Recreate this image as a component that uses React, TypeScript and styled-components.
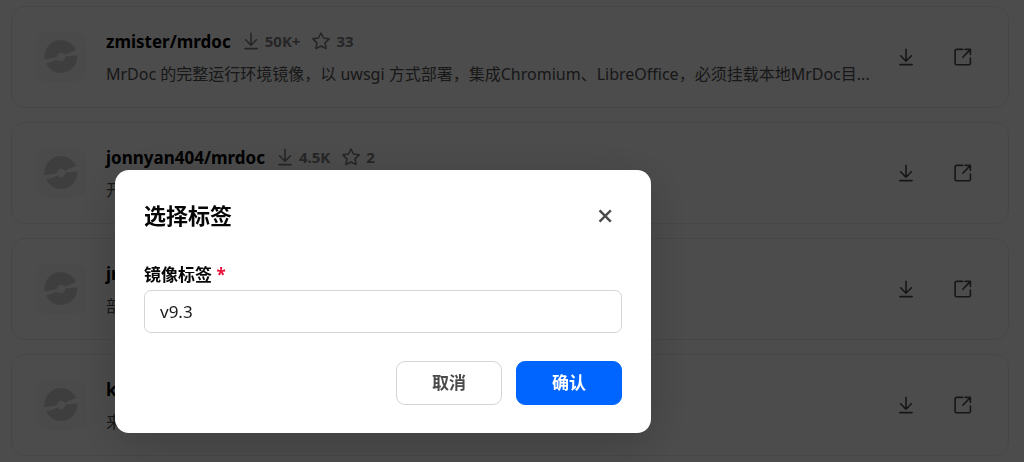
import React from "react";
import styled, { createGlobalStyle } from "styled-components";

const GlobalStyle = createGlobalStyle`
  * { box-sizing: border-box; }
  body {
    margin: 0;
    background: #fff;
    color: #060607;
    font-family: "Noto Sans", "Noto Sans CJK SC", sans-serif;
    overflow: hidden;
  }
  button, input { font-family: inherit; }
`;

const List = styled.ul`
  display: flex;
  flex-direction: column;
  gap: 14px;
  margin: 0;
  padding: 6px 15px 6px 11px;
  list-style: none;
`;

const Card = styled.li`
  display: flex;
  align-items: center;
  gap: 20px;
  padding: 20px 24px;
  border: 1px solid #ebebeb;
  border-radius: 14px;
`;

const Thumb = styled.div`
  display: flex;
  align-items: center;
  justify-content: center;
  flex: none;
  width: 50px;
  height: 50px;
  border-radius: 10px;
  background: #f7f7f7;
`;

const Info = styled.div`
  flex: 1;
  min-width: 0;
`;

const Heading = styled.div`
  display: flex;
  align-items: flex-start;
  gap: 11px;
  height: 30px;
`;

const Name = styled.h3`
  margin: 0;
  font-size: 17px;
  line-height: 30px;
  font-weight: 700;
  color: #000;
`;

const Stat = styled.span`
  display: flex;
  align-items: center;
  gap: 5px;
  font-size: 15px;
  line-height: 28px;
  font-weight: 700;
  color: #7d7d80;
`;

const Description = styled.p`
  margin: 0;
  padding-top: 4px;
  font-size: 16px;
  line-height: 26px;
  color: #505053;
  white-space: nowrap;
  font-variant-ligatures: none;
`;

const Actions = styled.div`
  display: flex;
  gap: 14px;
`;

const IconButton = styled.button<{ $size: number }>`
  display: flex;
  align-items: center;
  justify-content: center;
  width: ${(p) => p.$size}px;
  height: ${(p) => p.$size}px;
  padding: 0;
  border: 0;
  border-radius: 8px;
  background: transparent;
  color: #4b4b4c;
  cursor: pointer;
`;

const Overlay = styled.div`
  position: fixed;
  inset: 0;
  display: flex;
  align-items: flex-start;
  padding: 170px 20px 0 115px;
  background: rgba(0, 0, 0, 0.7);
`;

const Dialog = styled.form`
  width: 100%;
  max-width: 536px;
  padding: 28px 29px;
  border-radius: 14px;
  background: #fff;
  box-shadow: 0 10px 50px rgba(0, 0, 0, 0.2);
`;

const DialogHeader = styled.header`
  display: flex;
  align-items: center;
  justify-content: space-between;
  height: 36px;
`;

const Title = styled.h2`
  margin: 0;
  padding-bottom: 2px;
  font-size: 22px;
  line-height: 34px;
  font-weight: 700;
`;

const Label = styled.label`
  display: block;
  padding: 27px 0 1px;
  font-size: 17px;
  line-height: 28px;
  font-weight: 700;
`;

const Required = styled.span`
  color: #e9143d;
`;

const TextInput = styled.input`
  display: block;
  width: 100%;
  height: 43px;
  padding: 0 15px;
  border: 1px solid #d5d5d6;
  border-radius: 7px;
  background: #fff;
  color: #1c1c1e;
  font-size: 17px;
  outline: none;
`;

const Footer = styled.footer`
  display: flex;
  justify-content: flex-end;
  gap: 14px;
  padding-top: 28px;
`;

const Button = styled.button<{ $primary?: boolean }>`
  width: 106px;
  height: 44px;
  padding: 0 0 4px;
  border: 1px solid ${(p) => (p.$primary ? "#0064ff" : "#d5d5d6")};
  border-radius: 9px;
  background: ${(p) => (p.$primary ? "#0064ff" : "#fff")};
  color: ${(p) => (p.$primary ? "#fff" : "#4b4b4c")};
  font-size: 17px;
  font-weight: 700;
  cursor: pointer;
`;

const DownloadIcon = () => (
  <svg width="18" height="18" viewBox="0 0 18 18" fill="none" stroke="currentColor" strokeWidth="1.6" strokeLinecap="round" strokeLinejoin="round" aria-hidden="true">
    <path d="M9 1.2v11.6M3.6 7.8 9 13.2l5.4-5.4M2.9 16.6h12.2" />
  </svg>
);

const StarIcon = () => (
  <svg width="20" height="20" viewBox="0 0 20 20" fill="none" stroke="currentColor" strokeWidth="1.6" strokeLinejoin="round" aria-hidden="true">
    <path d="m10 2 2.5 5 5.6.9-4 4 .9 5.7-5-2.6-5 2.6.9-5.7-4-4 5.6-.9z" />
  </svg>
);

const OpenIcon = () => (
  <svg width="18" height="18" viewBox="0 0 18 18" fill="none" stroke="currentColor" strokeWidth="1.6" strokeLinecap="round" strokeLinejoin="round" aria-hidden="true">
    <path d="M8.7 1.4H2.6A1.5 1.5 0 0 0 1.1 2.9V15.2A1.5 1.5 0 0 0 2.6 16.7H14.900A1.5 1.5 0 0 0 16.400 15.2V10M11.200 1.4H16.400V6.400M16.200 1.600 8.800 9.200" />
  </svg>
);

const CloseIcon = () => (
  <svg width="14" height="14" viewBox="0 0 14 14" fill="none" stroke="currentColor" strokeWidth="2.4" strokeLinecap="square" aria-hidden="true">
    <path d="m2.400 2.200 9.600 9.600M12 2.200 2.400 11.800" />
  </svg>
);

const ImageLogo = () => (
  <svg width="34" height="34" viewBox="0 0 34 34" aria-hidden="true">
    <g fill="#cfcfcf">
      <path d="M.6 19.300A16.500 16.500 0 0 1 32 10L21 14.500 17 17 12.500 17.500Z" />
      <path d="M33.400 15.300A16.500 16.500 0 0 1 2.200 23.800L13 19.800 17 17 21.500 16.600Z" />
    </g>
    <circle cx="17" cy="17" r="4.200" fill="#f7f7f7" />
  </svg>
);

interface Repo {
  name: string;
  description: string;
  downloads?: string;
  stars?: string;
}

const repos: Repo[] = [
  {
    name: "zmister/mrdoc",
    downloads: "50K+",
    stars: "33",
    description: "MrDoc 的完整运行环境镜像，以 uwsgi 方式部署，集成Chromium、LibreOffice，必须挂载本地MrDoc目...",
  },
  { name: "jonnyan404/mrdoc", downloads: "4.5K", stars: "2", description: "开" },
  { name: "jr", description: "部" },
  { name: "k", description: "来" },
];

const RepoCard = ({ repo }: { repo: Repo }) => (
  <Card>
    <Thumb><ImageLogo /></Thumb>
    <Info>
      <Heading>
        <Name>{repo.name}</Name>
        {repo.downloads && <Stat><DownloadIcon />{repo.downloads}</Stat>}
        {repo.stars && <Stat><StarIcon />{repo.stars}</Stat>}
      </Heading>
      <Description>{repo.description}</Description>
    </Info>
    <Actions>
      <IconButton type="button" $size={43} aria-label="下载"><DownloadIcon /></IconButton>
      <IconButton type="button" $size={43} aria-label="打开"><OpenIcon /></IconButton>
    </Actions>
  </Card>
);

export default function App() {
  return (
    <>
      <GlobalStyle />
      <List>
        {repos.map((repo) => <RepoCard key={repo.name} repo={repo} />)}
      </List>
      <Overlay>
        <Dialog role="dialog" aria-modal="true" aria-labelledby="dialog-title" onSubmit={(e) => e.preventDefault()}>
          <DialogHeader>
            <Title id="dialog-title">选择标签</Title>
            <IconButton type="button" $size={34} aria-label="关闭"><CloseIcon /></IconButton>
          </DialogHeader>
          <Label htmlFor="image-tag">镜像标签 <Required>*</Required></Label>
          <TextInput id="image-tag" defaultValue="v9.3" />
          <Footer>
            <Button type="button">取消</Button>
            <Button type="submit" $primary>确认</Button>
          </Footer>
        </Dialog>
      </Overlay>
    </>
  );
}
